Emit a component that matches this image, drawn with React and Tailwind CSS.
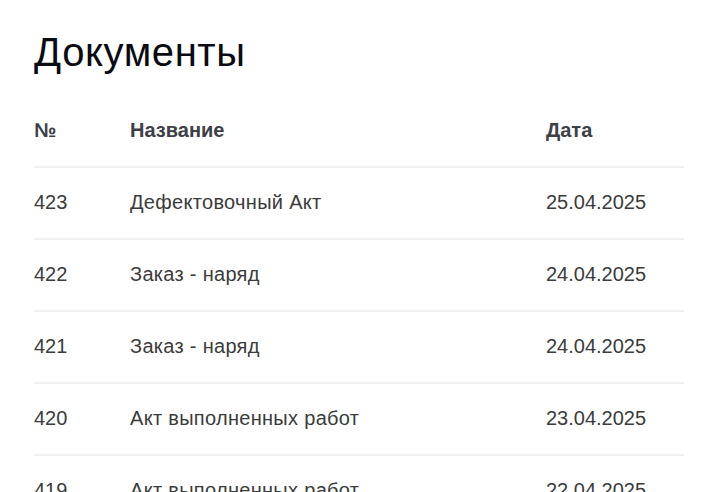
import React from 'react';

const docs = [
    { id: 423, name: 'Дефектовочный Акт', date: '25.04.2025' },
    { id: 422, name: 'Заказ - наряд', date: '24.04.2025' },
    { id: 421, name: 'Заказ - наряд', date: '24.04.2025' },
    { id: 420, name: 'Акт выполненных работ', date: '23.04.2025' },
    { id: 419, name: 'Акт выполненных работ', date: '22.04.2025' },
    { id: 418, name: 'Заказ - наряд', date: '21.04.2025' },
];

const App = () => {
    return (
        <div className="min-h-screen bg-white px-[34px] pt-[30px] font-['Liberation_Sans',Arial,sans-serif]">
            <h1 className="text-[40px] leading-[44px] font-normal tracking-[0.6px] text-[#0b0b12]">Документы</h1>

            <div className="mt-[22px] w-[650px]">
                <div className="grid h-[72px] grid-cols-[96px_416px_1fr] items-center border-b-2 border-[#f0f0f0] pb-[2px] text-[20px] font-bold text-[#3d4046]">
                    <div>№</div>
                    <div>Название</div>
                    <div>Дата</div>
                </div>
                {docs.map((d) => (
                    <div
                        key={d.id}
                        className="grid h-[72px] grid-cols-[96px_416px_1fr] items-center border-b-2 border-[#f0f0f0] pb-[2px] text-[20px] text-[#3b3b3b]"
                    >
                        <div>{d.id}</div>
                        <div className="tracking-[0.3px]">{d.name}</div>
                        <div>{d.date}</div>
                    </div>
                ))}
            </div>
        </div>
    );
};

export default App;
